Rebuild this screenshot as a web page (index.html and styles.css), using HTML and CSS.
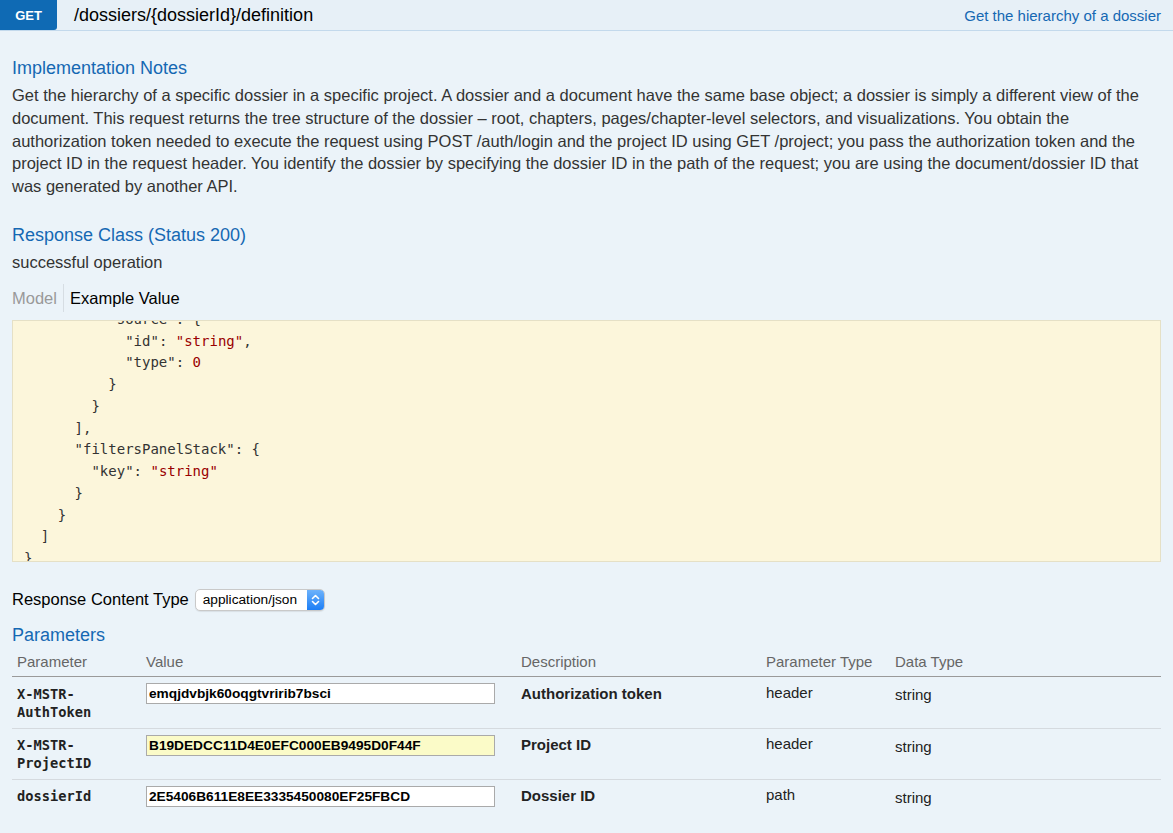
FILE: index.html
```html
<!DOCTYPE html>
<html lang="en">
<head>
<meta charset="utf-8">
<title>GET /dossiers/{dossierId}/definition</title>
<link rel="stylesheet" href="styles.css">
</head>
<body>
<div class="operation">
  <div class="heading">
    <span class="method">GET</span>
    <span class="path">/dossiers/{dossierId}/definition</span>
    <a class="summary" href="#">Get the hierarchy of a dossier</a>
  </div>
  <div class="content">
    <h4 class="section-title first">Implementation Notes</h4>
    <p class="notes">Get the hierarchy of a specific dossier in a specific project. A dossier and a document have the same base object; a dossier is simply a different view of the document. This request returns the tree structure of the dossier – root, chapters, pages/chapter-level selectors, and visualizations. You obtain the authorization token needed to execute the request using POST /auth/login and the project ID using GET /project; you pass the authorization token and the project ID in the request header. You identify the dossier by specifying the dossier ID in the path of the request; you are using the document/dossier ID that was generated by another API.</p>

    <h4 class="section-title response-title">Response Class (Status 200)</h4>
    <div class="response-desc">successful operation</div>

    <div class="tabs">
      <span class="tab tab-model">Model</span>
      <span class="tab tab-active">Example Value</span>
    </div>

    <div class="code-box">
<pre class="code"><span class="k">          "source"</span>: {
            <span class="k">"id"</span>: <span class="s">"string"</span>,
            <span class="k">"type"</span>: <span class="n">0</span>
          }
        }
      ],
      <span class="k">"filtersPanelStack"</span>: {
        <span class="k">"key"</span>: <span class="s">"string"</span>
      }
    }
  ]
}</pre>
    </div>

    <div class="content-type">
      <span class="ct-label">Response Content Type</span>
      <span class="select">
        <span class="select-text">application/json</span>
        <span class="stepper">
          <svg width="17" height="20" viewBox="0 0 17 20" aria-hidden="true">
            <path d="M5.5 8.5 L8.5 5.5 L11.5 8.5" fill="none" stroke="#fff" stroke-width="1.6" stroke-linecap="round" stroke-linejoin="round"/>
            <path d="M5.5 11.5 L8.5 14.5 L11.5 11.5" fill="none" stroke="#fff" stroke-width="1.6" stroke-linecap="round" stroke-linejoin="round"/>
          </svg>
        </span>
      </span>
    </div>

    <h4 class="section-title params-title">Parameters</h4>
    <table class="params">
      <colgroup>
        <col class="c-name">
        <col class="c-value">
        <col class="c-desc">
        <col class="c-ptype">
        <col class="c-dtype">
      </colgroup>
      <thead>
        <tr>
          <th>Parameter</th>
          <th>Value</th>
          <th>Description</th>
          <th>Parameter Type</th>
          <th>Data Type</th>
        </tr>
      </thead>
      <tbody>
        <tr>
          <td class="pname">X-MSTR-<br>AuthToken</td>
          <td class="pvalue"><input class="pinput" type="text" value="emqjdvbjk60oqgtvririb7bsci"></td>
          <td class="pdesc">Authorization token</td>
          <td class="ptype">header</td>
          <td class="dtype">string</td>
        </tr>
        <tr>
          <td class="pname">X-MSTR-<br>ProjectID</td>
          <td class="pvalue"><input class="pinput pinput-filled" type="text" value="B19DEDCC11D4E0EFC000EB9495D0F44F"></td>
          <td class="pdesc">Project ID</td>
          <td class="ptype">header</td>
          <td class="dtype">string</td>
        </tr>
        <tr>
          <td class="pname">dossierId</td>
          <td class="pvalue"><input class="pinput" type="text" value="2E5406B611E8EE3335450080EF25FBCD"></td>
          <td class="pdesc">Dossier ID</td>
          <td class="ptype">path</td>
          <td class="dtype">string</td>
        </tr>
      </tbody>
    </table>
  </div>
</div>
</body>
</html>
```
FILE: styles.css
```css
* { box-sizing: border-box; }

html, body {
  margin: 0;
  padding: 0;
  background: #ebf3f9;
}

body {
  font-family: "Liberation Sans", Arial, Helvetica, sans-serif;
  color: #333;
  height: 833px;
  overflow: hidden;
}

.heading {
  display: flex;
  align-items: center;
  height: 31px;
  background: #e7f0f7;
  border-bottom: 1px solid #c3d9ec;
}

.method {
  width: 57px;
  height: 30px;
  align-self: flex-start;
  display: flex;
  align-items: center;
  justify-content: center;
  background: #0f6ab4;
  color: #fff;
  font-size: 13px;
  font-weight: bold;
  border-radius: 0 0 3px 0;
}

.path {
  margin-left: 17px;
  font-size: 18px;
  color: #000;
  flex: 1;
}

.summary {
  margin-right: 12px;
  font-size: 15px;
  color: #1568b3;
  text-decoration: none;
}

.content {
  padding: 0 12px;
}

.section-title {
  margin: 0;
  font-size: 18px;
  line-height: 22px;
  font-weight: normal;
  color: #1568b3;
}

.section-title.first { margin-top: 26px; margin-bottom: 5px; }

.notes {
  margin: 0;
  font-size: 16.5px;
  line-height: 22.75px;
  color: #333;
}

.response-title { margin-top: 26px; }

.response-desc {
  margin-top: 5px;
  font-size: 16.5px;
  line-height: 22px;
  color: #333;
}

.tabs {
  display: flex;
  margin-top: 11px;
  font-size: 16.5px;
  line-height: 22px;
}

.tab { padding: 3px 0; }

.tab-model {
  color: #999;
  padding-right: 6px;
  border-right: 1px solid #d6dde3;
}

.tab-active {
  color: #000;
  padding-left: 6px;
}

.code-box {
  margin-top: 8px;
  height: 242px;
  overflow: hidden;
  background: #fcf6db;
  border: 1px solid #e5e0c6;
}

.code {
  margin: -11.8px 0 0 0;
  padding: 0 11px;
  font-family: "DejaVu Sans Mono", Menlo, monospace;
  font-size: 14px;
  line-height: 21.75px;
  color: #333;
}

.code .k { color: #333; }
.code .s { color: #990000; }
.code .n { color: #990000; }

.content-type {
  display: flex;
  align-items: center;
  margin-top: 27px;
  height: 22px;
}

.ct-label {
  font-size: 16.5px;
  color: #000;
}

.select {
  margin-left: 6px;
  width: 130px;
  height: 22px;
  display: flex;
  align-items: stretch;
  background: #fff;
  border: 1px solid #c9c9c9;
  border-radius: 5px;
  box-shadow: 0 1px 1px rgba(0, 0, 0, 0.08);
}

.select-text {
  flex: 1;
  padding-left: 7px;
  font-size: 13.7px;
  line-height: 20px;
  color: #000;
}

.stepper {
  width: 17px;
  display: flex;
  align-items: center;
  justify-content: center;
  background: linear-gradient(#6db2fb, #1c7ef6);
  border-radius: 0 4px 4px 0;
}

.params-title { margin-top: 13px; }

.params {
  width: 100%;
  table-layout: fixed;
  border-collapse: collapse;
  font-size: 15px;
  line-height: 18px;
}

.c-name { width: 129px; }
.c-value { width: 375px; }
.c-desc { width: 245px; }
.c-ptype { width: 129px; }

.params th {
  text-align: left;
  font-weight: normal;
  color: #666;
  padding: 7px 5px 5px;
  border-bottom: 1px solid #9a9a9a;
}

.params td {
  vertical-align: top;
  padding: 7px 5px 7px;
  color: #222;
}

.params tbody tr + tr td {
  border-top: 1px solid #d5dadf;
}

.params tbody tr:first-child td {
  padding-top: 8px;
}

.pname {
  font-family: "DejaVu Sans Mono", Menlo, monospace;
  font-weight: bold;
  font-size: 13.7px;
  color: #222;
}

.params td.pvalue { padding-top: 6px; }
.params tbody tr:first-child td.pvalue { padding-top: 6px; }

.pinput {
  display: block;
  width: 349px;
  height: 21px;
  margin: 0;
  padding: 0 2px;
  border: 1px solid #aaa;
  background: #fff;
  font-family: "Liberation Sans", Arial, sans-serif;
  font-size: 13.7px;
  font-weight: bold;
  color: #000;
}

.pinput-filled { background: #fbfbc8; }

.pdesc {
  font-weight: bold;
  color: #333;
}

.params td.ptype { padding-top: 6px; }
.params tbody tr:first-child td.ptype { padding-top: 7px; }
.params td.dtype { padding-top: 9px; }
.params tbody tr:first-child td.dtype { padding-top: 9px; }
```
